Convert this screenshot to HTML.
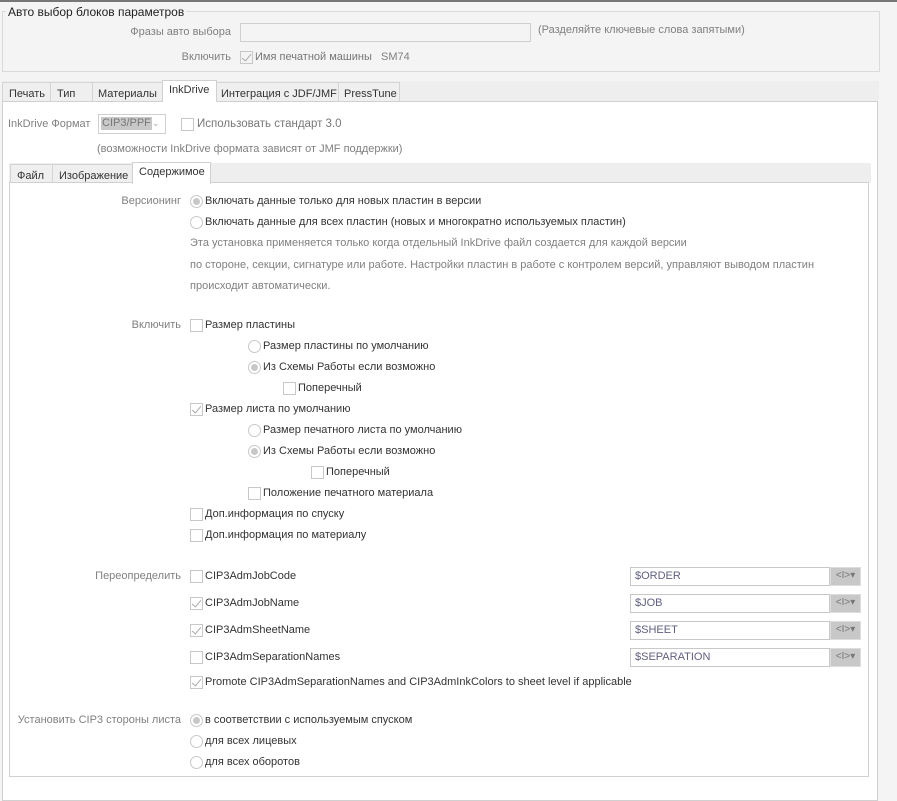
<!DOCTYPE html>
<html><head><meta charset="utf-8"><style>
*{box-sizing:border-box;margin:0;padding:0}
body{width:897px;height:784px;background:#f4f4f4;font-family:"Liberation Sans","DejaVu Sans",sans-serif;font-size:11px;color:#333;position:relative;overflow:hidden}
.a{position:absolute;white-space:nowrap;line-height:13px}
.l{color:#808080}
.r{text-align:right}
.cb{position:absolute;width:13px;height:13px;border:1px solid #c8c8c8;background:#fff}
.rd{position:absolute;width:13px;height:13px;border:1px solid #c8c8c8;border-radius:50%;background:#fff}
.rd.on::after{content:"";position:absolute;left:2px;top:2px;width:7px;height:7px;border-radius:50%;background:#c8c8c8}
.chk::after{content:"";position:absolute;left:3px;top:0px;width:4px;height:8px;border:solid #aaa;border-width:0 1px 1px 0;transform:rotate(40deg)}
.tab{position:absolute;height:20px;border:1px solid #d4d4d4;border-bottom:none;background:#efefef;padding:5px 0 0 6px;line-height:13px;white-space:nowrap;overflow:hidden}
.tab.act{background:#fff;height:22px;padding-top:3px}
.inp{position:absolute;height:19px;border:1px solid #c8c8c8;background:#fff;padding:2px 4px;color:#606080}
.btn{position:absolute;width:31px;height:19px;border:1px solid #ddd;background:#c8c8c8;color:#777;font-size:10px;text-align:center;line-height:16px;white-space:nowrap}
</style></head><body>
<div style="position:absolute;left:0;top:0;width:897px;height:2px;background:#777"></div>
<div style="position:absolute;left:2px;top:11px;width:878px;height:61px;border:1px solid #dadada"></div>
<div class="a" style="left:6px;top:6px;background:#f4f4f4;padding:0 2px;color:#222;font-size:12px">Авто выбор блоков параметров</div>
<div class="a l r" style="left:100px;width:131px;top:26px">Фразы авто выбора</div>
<div style="position:absolute;left:240px;top:23px;width:291px;height:19px;border:1px solid #d0d0d0;background:#f4f4f4"></div>
<div class="a l" style="left:538px;top:24px">(Разделяйте ключевые слова запятыми)</div>
<div class="a l r" style="left:100px;width:131px;top:51px">Включить</div>
<div class="cb chk" style="left:240px;top:51px;background:#f4f4f4"></div>
<div class="a l" style="left:255px;top:51px;color:#777">Имя печатной машины</div>
<div class="a l" style="left:381px;top:51px">SM74</div>

<div style="position:absolute;left:2px;top:81px;width:877px;height:20px;background:#eee"></div>
<div class="tab" style="left:2px;top:82px;width:49px">Печать</div>
<div class="tab" style="left:50px;top:82px;width:43px">Тип</div>
<div class="tab" style="left:92px;top:82px;width:71px;padding-left:5px">Материалы</div>
<div class="tab" style="left:216px;top:82px;width:123px;padding-left:4px">Интеграция с JDF/JMF</div>
<div class="tab" style="left:338px;top:82px;width:62px;padding-left:5px">PressTune</div>
<div style="position:absolute;left:2px;top:101px;width:876px;height:700px;border:1px solid #d0d0d0;background:#fff"></div>
<div class="tab act" style="left:162px;top:80px;width:55px;border-color:#d0d0d0;z-index:2;height:22px">InkDrive</div>

<div class="a l" style="left:8px;top:118px">InkDrive Формат</div>
<div style="position:absolute;left:98px;top:114px;width:68px;height:20px;border:1px solid #d0d0d0;background:#fff"></div>
<div class="a" style="left:101px;top:117px;background:#c8c8c8;color:#777;padding:0 1px">CIP3/PPF</div>
<div class="a" style="left:152px;top:117px;color:#aaa;font-size:9px">&#8964;</div>
<div class="cb" style="left:181px;top:118px"></div>
<div class="a" style="left:197px;top:118px;color:#777;font-size:11.5px">Использовать стандарт 3.0</div>
<div class="a l" style="left:97px;top:143px">(возможности InkDrive формата зависят от JMF поддержки)</div>

<div style="position:absolute;left:9px;top:163px;width:862px;height:20px;background:#eee"></div>
<div class="tab" style="left:10px;top:164px;width:43px">Файл</div>
<div class="tab" style="left:52px;top:164px;width:81px">Изображение</div>
<div style="position:absolute;left:9px;top:182px;width:860px;height:595px;border:1px solid #d0d0d0;background:#fff"></div>
<div class="tab act" style="left:132px;top:162px;width:79px;border-color:#d0d0d0;z-index:2;height:22px">Содержимое</div>

<div class="a l r" style="left:20px;width:161px;top:195px">Версионинг</div>
<div class="rd on" style="left:190px;top:195px"></div><div class="a" style="left:205px;top:195px">Включать данные только для новых пластин в версии</div>
<div class="rd" style="left:190px;top:216px"></div><div class="a" style="left:205px;top:216px">Включать данные для всех пластин (новых и многократно используемых пластин)</div>
<div class="a l" style="left:190px;top:237px">Эта установка применяется только когда отдельный InkDrive файл создается для каждой версии</div>
<div class="a l" style="left:190px;top:259px">по стороне, секции, сигнатуре или работе. Настройки пластин в работе с контролем версий, управляют выводом пластин</div>
<div class="a l" style="left:190px;top:280px">происходит автоматически.</div>

<div class="a l r" style="left:20px;width:161px;top:319px">Включить</div>
<div class="cb" style="left:190px;top:319px"></div><div class="a" style="left:205px;top:319px">Размер пластины</div>
<div class="rd" style="left:248px;top:340px"></div><div class="a" style="left:263px;top:340px">Размер пластины по умолчанию</div>
<div class="rd on" style="left:248px;top:361px"></div><div class="a" style="left:263px;top:361px">Из Схемы Работы если возможно</div>
<div class="cb" style="left:283px;top:382px"></div><div class="a" style="left:298px;top:382px">Поперечный</div>
<div class="cb chk" style="left:190px;top:403px"></div><div class="a" style="left:205px;top:403px">Размер листа по умолчанию</div>
<div class="rd" style="left:248px;top:424px"></div><div class="a" style="left:263px;top:424px">Размер печатного листа по умолчанию</div>
<div class="rd on" style="left:248px;top:445px"></div><div class="a" style="left:263px;top:445px">Из Схемы Работы если возможно</div>
<div class="cb" style="left:311px;top:466px"></div><div class="a" style="left:326px;top:466px">Поперечный</div>
<div class="cb" style="left:248px;top:487px"></div><div class="a" style="left:263px;top:487px">Положение печатного материала</div>
<div class="cb" style="left:190px;top:508px"></div><div class="a" style="left:205px;top:508px">Доп.информация по спуску</div>
<div class="cb" style="left:190px;top:529px"></div><div class="a" style="left:205px;top:529px">Доп.информация по материалу</div>

<div class="a l r" style="left:20px;width:161px;top:570px">Переопределить</div>
<div class="cb" style="left:190px;top:570px"></div><div class="a" style="left:205px;top:570px">CIP3AdmJobCode</div>
<div class="inp" style="left:630px;top:567px;width:200px">$ORDER</div><div class="btn" style="left:830px;top:567px">&lt;I&gt;▾</div>
<div class="cb chk" style="left:190px;top:597px"></div><div class="a" style="left:205px;top:597px">CIP3AdmJobName</div>
<div class="inp" style="left:630px;top:594px;width:200px">$JOB</div><div class="btn" style="left:830px;top:594px">&lt;I&gt;▾</div>
<div class="cb chk" style="left:190px;top:624px"></div><div class="a" style="left:205px;top:624px">CIP3AdmSheetName</div>
<div class="inp" style="left:630px;top:621px;width:200px">$SHEET</div><div class="btn" style="left:830px;top:621px">&lt;I&gt;▾</div>
<div class="cb" style="left:190px;top:651px"></div><div class="a" style="left:205px;top:651px">CIP3AdmSeparationNames</div>
<div class="inp" style="left:630px;top:648px;width:200px">$SEPARATION</div><div class="btn" style="left:830px;top:648px">&lt;I&gt;▾</div>
<div class="cb chk" style="left:190px;top:676px"></div><div class="a" style="left:205px;top:676px">Promote CIP3AdmSeparationNames and CIP3AdmInkColors to sheet level if applicable</div>

<div class="a l r" style="left:10px;width:171px;top:714px">Установить CIP3 стороны листа</div>
<div class="rd on" style="left:190px;top:714px"></div><div class="a" style="left:205px;top:714px">в соответствии с используемым спуском</div>
<div class="rd" style="left:190px;top:735px"></div><div class="a" style="left:205px;top:735px">для всех лицевых</div>
<div class="rd" style="left:190px;top:756px"></div><div class="a" style="left:205px;top:756px">для всех оборотов</div>
</body></html>
